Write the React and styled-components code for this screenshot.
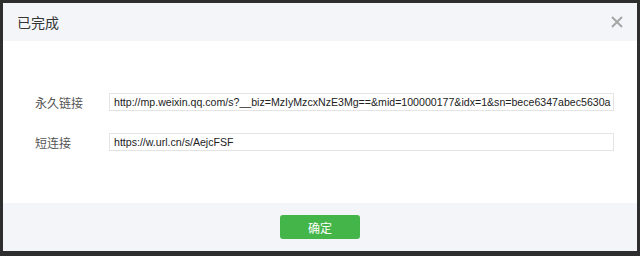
import styled, { createGlobalStyle } from "styled-components";

const GlobalStyle = createGlobalStyle`
  html, body {
    margin: 0;
    padding: 0;
    background: #2b2b2b;
  }
  body {
    font-family: "Helvetica Neue", "Liberation Sans", "Noto Sans CJK SC", sans-serif;
  }
`;

const Backdrop = styled.div`
  width: 640px;
  height: 256px;
  box-sizing: border-box;
  padding: 3px 3px 5px 3px;
  background: #2e2e2e;
`;

const Dialog = styled.div`
  height: 100%;
  display: flex;
  flex-direction: column;
  background: #fff;
`;

const Header = styled.div`
  height: 38px;
  display: flex;
  align-items: center;
  justify-content: space-between;
  padding: 0 13px 0 14px;
  background: #f4f5f9;
`;

const Title = styled.h3`
  margin: 0;
  font-size: 14px;
  font-weight: normal;
  color: #353535;
`;

const Close = styled.button`
  border: 0;
  padding: 0;
  background: none;
  width: 14px;
  height: 14px;
  display: flex;
`;

const Body = styled.div`
  flex: 1;
  display: flex;
  flex-direction: column;
  justify-content: center;
  gap: 22px;
  padding: 0 23px 0 32px;
`;

const Row = styled.div`
  display: flex;
  align-items: center;
`;

const Label = styled.label`
  width: 74px;
  font-size: 12px;
  color: #555;
`;

const Field = styled.div`
  flex: 1;
  height: 18px;
  box-sizing: border-box;
  border: 1px solid #e4e4e4;
  padding: 0 4px;
  font-size: 10.6px;
  line-height: 16px;
  color: #222;
  white-space: nowrap;
  overflow: hidden;
`;

const Footer = styled.div`
  height: 48px;
  display: flex;
  align-items: center;
  justify-content: center;
  background: #f4f5f9;
`;

const Button = styled.button`
  width: 80px;
  height: 24px;
  border: 0;
  border-radius: 3px;
  background: #44b549;
  color: #fff;
  font-size: 12px;
  font-family: inherit;
`;

const links = [
  {
    label: "永久链接",
    value:
      "http://mp.weixin.qq.com/s?__biz=MzIyMzcxNzE3Mg==&mid=100000177&idx=1&sn=bece6347abec5630a",
  },
  { label: "短连接", value: "https://w.url.cn/s/AejcFSF" },
];

export default function App() {
  return (
    <>
      <GlobalStyle />
      <Backdrop>
        <Dialog>
          <Header>
            <Title>已完成</Title>
            <Close aria-label="关闭">
              <svg width="14" height="14" viewBox="0 0 14 14">
                <path d="M2 2L12 12M12 2L2 12" stroke="#a6a6a6" strokeWidth="2" />
              </svg>
            </Close>
          </Header>
          <Body>
            {links.map((link) => (
              <Row key={link.label}>
                <Label>{link.label}</Label>
                <Field>{link.value}</Field>
              </Row>
            ))}
          </Body>
          <Footer>
            <Button>确定</Button>
          </Footer>
        </Dialog>
      </Backdrop>
    </>
  );
}
